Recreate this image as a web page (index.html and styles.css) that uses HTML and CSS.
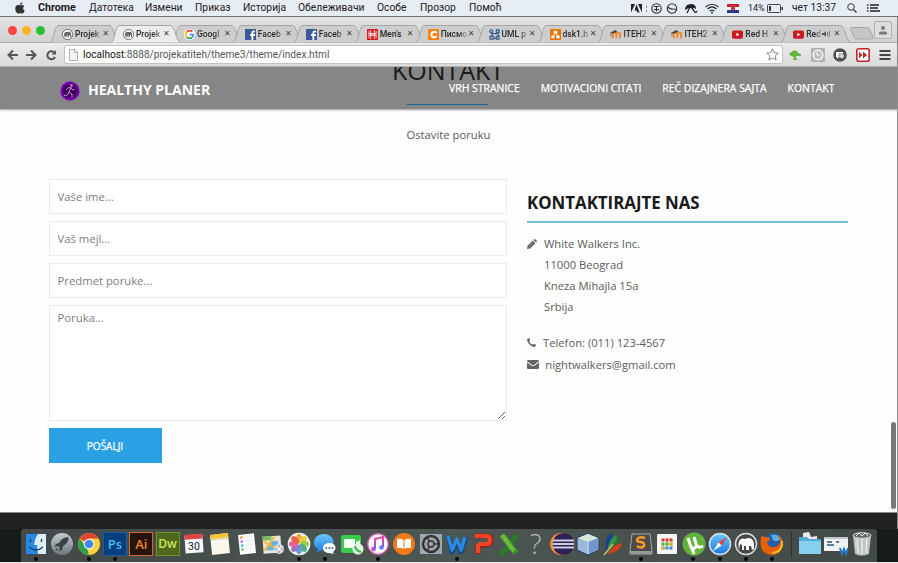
FILE: index.html
```
<!DOCTYPE html>
<html lang="sr">
<head>
<meta charset="utf-8">
<title>Projekat</title>
<link rel="stylesheet" href="styles.css">
</head>
<body>
<svg class="defs" width="0" height="0">
  <defs>
    <symbol id="tab" viewBox="0 0 70 18"><path d="M0 17.5C4 16 4 2 8 .5H60C64 2 65 16 69.500 17.500" stroke="#a5a5a5"/></symbol>
    <symbol id="mamp" viewBox="0 0 24 24"><circle cx="12" cy="12" r="11" fill="#fff" stroke="#666" stroke-width="2"/><path d="M5 18C3 8 7 5 11 7C17 4 21 8 20 17L18 18L17 13L15 13V18H12V13L10 14V18H7V13Z" fill="#666"/></symbol>
    <symbol id="fb" viewBox="0 0 12 12"><path fill="#3b5998" d="M0 0h12v12H0z"/><path fill="#fff" d="M7 12V7.500H5.500V5.500H7V4Q7 1.500 9.500 1.500H11V3.500H10Q9 3.500 9 4.500V5.500H11L10.700 7.500H9V12z"/></symbol>
    <symbol id="moodle" viewBox="0 0 12 12"><path d="M3 10V6Q3 4 5 4T7 6V10M7 6Q7 4 9 4T11 6V10" fill="none" stroke="#f58220" stroke-width="2"/><path d="M0 4L6 1L8 3L3 5z" fill="#444"/><path d="M1 4V8" stroke="#777"/></symbol>
    <symbol id="yt" viewBox="0 0 12 12"><rect y="1.500" width="12" height="9" rx="2" fill="#cc181e"/><path fill="#fff" d="M4.700 4v4l3.500-2z"/></symbol>
    <linearGradient id="blue" x2="0" y2="1"><stop stop-color="#69c8fa"/><stop offset="1" stop-color="#1979e6"/></linearGradient>
    <linearGradient id="silver" x2="0" y2="1"><stop stop-color="#c4cbd0"/><stop offset="1" stop-color="#70777c"/></linearGradient>
    <linearGradient id="pink" x2="0" y2="1"><stop stop-color="#f0489b"/><stop offset="1" stop-color="#8356e8"/></linearGradient>
    <radialGradient id="purple"><stop stop-color="#2a0040"/><stop offset=".6" stop-color="#3d0060"/><stop offset="1" stop-color="#8e09c4"/></radialGradient>
  </defs>
</svg>

<header class="menubar">
  <svg class="apple" viewBox="0 0 10 12"><path fill="#333" d="M5 3.500C6 3 8 2.500 9.300 4C7.500 5.200 7.800 7.700 9.700 8.500C9 10.500 8 12 6.800 11.500C5.500 11 5 11 3.800 11.500C2 12-.5 8 .5 5C1.300 2.800 3.500 2.700 5 3.500ZM5 3C5 1.500 6 .3 7.300 0C7.400 1.600 6.500 2.800 5 3Z"/></svg>
  <nav class="menus"><b>Chrome</b><span>Датотека</span><span>Измени</span><span>Приказ</span><span>Историја</span><span>Обележивачи</span><span>Особе</span><span>Прозор</span><span>Помоћ</span></nav>
  <div class="status">
    <svg width="122" height="14" viewBox="0 0 122 14">
      <path fill="#222" d="M0 3H4L0 11.500ZM7 3H11V11.500ZM5.500 3.500L8.500 11.500H6.500L5.600 9.600H3.500Z"/>
      <path d="M15.500 5v1.500M15.500 9v1.500" stroke="#666"/>
      <g fill="none" stroke="#333" stroke-width="1.100"><circle cx="25.500" cy="7.500" r="4.700"/><path d="M23 5.500H28M23 8.500H28M25.500 5V10.500"/><circle cx="41" cy="7.500" r="4.700"/><path d="M36.500 6Q39.500 9 45.500 8"/></g>
      <path d="M54 9Q54 3 60 3Q65 3 65 8Q60 5 54 9Z" fill="#222"/><path d="M60 6L64 11Q65 12 66 10M59 6L56 12" fill="none" stroke="#222" stroke-width="1.300"/>
      <g fill="none" stroke="#333" stroke-width="1.200"><path d="M74.500 6Q81 .5 87.500 6M76.500 8Q81 4 85.500 8M78.700 10.200Q81 8 83.300 10.200"/></g><circle cx="81" cy="11.700" r="1" fill="#333"/>
      <path fill="#d21c24" d="M96 3h12v3H96z"/><path fill="#f4f4f4" d="M96 6h12v3H96z"/><path fill="#24388e" d="M96 9h12v3H96z"/><path fill="#c43b49" d="M100 4h4v5l-2 1-2-1z"/>
    </svg>
    <span class="percent">14%</span>
    <svg class="battery" width="17" height="9" viewBox="0 0 17 9"><rect x=".5" y=".5" width="13" height="8" rx="1" fill="none" stroke="#444"/><path fill="#333" d="M2 2h2v5H2zM14.500 3h1.500v3h-1.500z"/></svg>
    <span class="clock">чет 13:37</span>
    <svg class="search" width="10" height="10" viewBox="0 0 10 10"><circle cx="4" cy="4" r="3.300" fill="none" stroke="#333"/><path d="M6.500 6.500L9.500 9.500" stroke="#333" stroke-width="1.300"/></svg>
    <svg width="13" height="8" viewBox="0 0 13 8"><path d="M0 1h1.500M3 1h9M0 4h1.500M3 4h8M0 7h1.500M3 7h10" stroke="#222" stroke-width="1.400"/></svg>
  </div>
</header>

<main class="window">
  <div class="tabstrip">
    <div class="lights"><i class="red"></i><i class="yellow"></i><i class="green"></i></div>
    <div class="tabs">
      <div class="tab"><svg class="shape"><use href="#tab"/></svg><svg class="fav"><use href="#mamp"/></svg><span>Projek</span><b>✕</b></div>
      <div class="tab active"><svg class="shape"><use href="#tab"/></svg><svg class="fav"><use href="#mamp"/></svg><span>Projek</span><b>✕</b></div>
      <div class="tab"><svg class="shape"><use href="#tab"/></svg><svg class="fav" viewBox="0 0 12 12"><circle cx="6" cy="6" r="6" fill="#fff"/><g fill="none" stroke-width="1.800"><path d="M9 3Q6 .5 3 3" stroke="#ea4335"/><path d="M3 3Q1 6 3 9" stroke="#fbbc05"/><path d="M3 9Q6 11.500 9 9" stroke="#34a853"/><path d="M9 9Q10 8 10 6H6" stroke="#4285f4"/></g></svg><span>Googl</span><b>✕</b></div>
      <div class="tab"><svg class="shape"><use href="#tab"/></svg><svg class="fav"><use href="#fb"/></svg><span>Faceb</span><b>✕</b></div>
      <div class="tab"><svg class="shape"><use href="#tab"/></svg><svg class="fav"><use href="#fb"/></svg><span>Faceb</span><b>✕</b></div>
      <div class="tab"><svg class="shape"><use href="#tab"/></svg><svg class="fav" viewBox="0 0 12 12"><rect width="12" height="12" rx="1" fill="#d71920"/><path d="M2 2v3h8V2M2 10V7h8v3M4 1v10M8 1v10M1 5.500h10" stroke="#fff" stroke-width=".8" fill="none"/></svg><span class="full">Men's</span><b>✕</b></div>
      <div class="tab"><svg class="shape"><use href="#tab"/></svg><svg class="fav" viewBox="0 0 12 12"><rect width="12" height="12" rx="1" fill="#f8820d"/><path d="M9.500 4.200Q7.500 2.300 4.800 3.500Q2.500 6 4.800 8.700Q7.500 9.800 9.500 8" stroke="#fff" stroke-width="2.200" fill="none"/></svg><span>Писмо</span><b>✕</b></div>
      <div class="tab"><svg class="shape"><use href="#tab"/></svg><svg class="fav" viewBox="0 0 12 12"><path d="M3 2V10H10V4M3 5H9" fill="none" stroke="#365f86" stroke-width="1.300"/><g fill="#a8bfd3" stroke="#365f86" stroke-width="1.200"><circle cx="2.500" cy="2.500" r="1.700"/><path d="M8 1h3v3H8zM1 8h4v3H1zM8 8h3v3H8z"/></g></svg><span>UML p</span><b>✕</b></div>
      <div class="tab"><svg class="shape"><use href="#tab"/></svg><svg class="fav" viewBox="0 0 12 12"><rect width="12" height="12" rx="1" fill="#e87400"/><path d="M6 3L3 9M6 3L9 9" stroke="#fff"/><path fill="#fff" d="M4 2h4v3H4zM1.500 7h3.500v3H1.500zM7 7h3.500v3H7z"/></svg><span>dsk1.h</span><b>✕</b></div>
      <div class="tab"><svg class="shape"><use href="#tab"/></svg><svg class="fav"><use href="#moodle"/></svg><span>ITEH2</span><b>✕</b></div>
      <div class="tab"><svg class="shape"><use href="#tab"/></svg><svg class="fav"><use href="#moodle"/></svg><span>ITEH2</span><b>✕</b></div>
      <div class="tab"><svg class="shape"><use href="#tab"/></svg><svg class="fav"><use href="#yt"/></svg><span>Red H</span><b>✕</b></div>
      <div class="tab"><svg class="shape"><use href="#tab"/></svg><svg class="fav"><use href="#yt"/></svg><span class="playing">Red</span><svg class="speaker" viewBox="0 0 8 8"><path d="M0 3h2l2-2v6L2 5H0z" fill="#555"/><path d="M5.500 2v4M7.300 1v6" stroke="#666" stroke-width=".8"/></svg><b>✕</b></div>
    </div>
    <svg class="newtab" viewBox="0 0 24 13"><path d="M2 .5H17Q19 .5 20 3L23 10Q23.500 12 22 12H7Q5 12 4 10L1 3Q0 .5 2 .5Z" fill="#c6c6c6" stroke="#a7a7a7"/></svg>
    <div class="profile"><svg width="10" height="9" viewBox="0 0 10 9"><circle cx="5" cy="2" r="2" fill="#777"/><path d="M1 8.500V7Q1 5.500 3 5.500H7Q9 5.500 9 7V8.500z" fill="#777"/></svg></div>
  </div>
  <div class="toolbar">
    <svg class="navicons" width="50" height="12" viewBox="0 0 50 12"><g fill="none" stroke="#555" stroke-width="2"><path d="M11 6H1.500M6 1.500L1.500 6L6 10.500M19 6H28.500M24 1.500L28.500 6L24 10.500"/><path d="M47 3.200A4 4 0 1 0 48 8"/></g><path fill="#555" d="M49 1V5.500H44.500z"/></svg>
    <div class="omnibox">
      <svg width="9" height="12" viewBox="0 0 9 12"><path d="M.5.5H6L8.500 3V11.500H.5ZM5.500.5V3.500H8.500" fill="#f4f4f4" stroke="#b0b0b0"/></svg>
      <span class="url"><em>localhost</em>:8888/projekatiteh/theme3/theme/index.html</span>
      <svg class="star" width="13" height="13" viewBox="0 0 13 13"><path d="M6.500.8L8.200 4.700L12.300 5.100L9.200 7.900L10.100 12L6.500 9.900L2.900 12L3.800 7.900L.7 5.100L4.800 4.700Z" fill="#fff" stroke="#777" stroke-width=".9"/></svg>
    </div>
    <div class="exts">
      <svg viewBox="0 0 14 14"><path d="M1 6Q2 4 4 4Q5 1 8 3Q10 3 10 5Q13 5 13 8H8V10L10 12H5L6 9L3 8Z" fill="#62b641"/></svg>
      <svg viewBox="0 0 14 14"><path fill="#b3b3b3" d="M0 0h14v14H0z"/><circle cx="7" cy="7" r="4.800" fill="#c0c0c0" stroke="#fff" stroke-width="1.300"/><path d="M6 4V7H9" fill="none" stroke="#fff"/></svg>
      <svg viewBox="0 0 14 14"><circle cx="7" cy="7" r="6.800" fill="#505050"/><path fill="#fff" d="M3 4h7v5H6l-2 2V9H3z"/><path fill="#ddd" stroke="#505050" stroke-width=".6" d="M6 6h5v4H9.500v1.500L8 10H6z"/></svg>
      <svg viewBox="0 0 14 14"><rect x=".8" y=".8" width="12.400" height="12.400" rx="2" fill="#fff" stroke="#bd2824" stroke-width="1.600"/><path fill="#bd2824" d="M3 3.500L6.500 7L3 10.500zM7 3.500L11 7L7 10.500z"/></svg>
      <svg viewBox="0 0 14 14"><path d="M1.500 3H12.500M1.500 7H12.500M1.500 11H12.500" stroke="#444" stroke-width="2.200"/></svg>
    </div>
  </div>

  <div class="page">
    <div class="navbar">
      <h2 class="section-title">KONTAKT</h2>
      <div class="brand"><svg width="20" height="20" viewBox="0 0 20 20"><circle cx="10" cy="10" r="9.700" fill="url(#purple)"/><circle cx="11.500" cy="4.500" r="1.200" fill="#d98adb"/><path d="M10.800 6.500L9 11L12 13V16.500M9 11L7.500 14L4 14.500M6 9L8 6.800L11 6.500L12.500 9L14.500 8.500" fill="none" stroke="#d98adb"/></svg><strong>HEALTHY PLANER</strong></div>
      <nav class="links"><a>VRH STRANICE</a><a>MOTIVACIONI CITATI</a><a>REČ DIZAJNERA SAJTA</a><a>KONTAKT</a></nav>
    </div>
    <p class="lead">Ostavite poruku</p>
    <div class="contact">
      <form class="form">
        <input type="text" placeholder="Vaše ime...">
        <input type="text" placeholder="Vaš mejl...">
        <input type="text" placeholder="Predmet poruke...">
        <textarea placeholder="Poruka..."></textarea>
        <button type="button">POŠALJI</button>
      </form>
      <section class="info">
        <h3>KONTAKTIRAJTE NAS</h3>
        <address>
          <p class="row"><svg width="10" height="10" viewBox="0 0 10 10"><path fill="#666" d="M0 10L.5 6.800L5.700 1.600L8.400 4.300L3.200 9.500ZM6.400 1L7.300.2Q8 0 8.500.4L9.700 1.600Q10 2 9.800 2.700L9 3.600Z"/><path d="M2 7.200L6 3.200" stroke="#ccc" stroke-width=".4"/></svg><span>White Walkers Inc.</span></p>
          <p class="row indent">11000 Beograd</p>
          <p class="row indent">Kneza Mihajla 15a</p>
          <p class="row indent">Srbija</p>
          <p class="row phone"><svg width="9" height="9" viewBox="0 0 9 9"><path fill="#666" d="M0 1.500Q1 0 2.200 0L3.200 2.400L2.200 3.500Q3.300 5.700 5.500 6.800L6.600 5.700L9 6.800Q9 8.500 7.500 9Q5 9 2.500 6.500T0 1.500Z"/></svg><span>Telefon: (011) 123-4567</span></p>
          <p class="row mail"><svg width="12" height="9" viewBox="0 0 12 9"><path fill="#666" d="M0 1Q0 0 1 0H11Q12 0 12 1L7 4.900Q6 5.500 5 4.900ZM0 2.200L4.500 5.700Q6 6.500 7.500 5.700L12 2.200V8Q12 9 11 9H1Q0 9 0 8Z"/></svg><span>nightwalkers@gmail.com</span></p>
        </address>
      </section>
    </div>
    <i class="thumb"></i>
    <footer></footer>
  </div>
</main>

<div class="desktop">
  <div class="dock">
    <div class="app run"><svg viewBox="0 0 24 24"><path fill="#2389e5" d="M2 2H22V22H2z"/><path fill="#dfedf7" d="M14 2H22V22H14Q13 17 13 13H10Q11 6 14 2z"/><path d="M6.500 7v3M17.500 7v3M5 15Q12 21 19 15" fill="none" stroke="#173c67" stroke-width="1.300"/></svg></div>
    <div class="app"><svg viewBox="0 0 24 24"><circle cx="12" cy="12" r="11" fill="url(#silver)"/><path fill="#3b4248" d="M18.500 5Q12 5 9 11L6 12L4.500 15L8 14L10 16L9 19.500L12 18L13 14Q19 11 18.500 5ZM7 16L5 19L8 17.500z"/></svg></div>
    <div class="app run"><svg viewBox="0 0 24 24"><circle cx="12" cy="12" r="11" fill="#ffd23f"/><path fill="#dd4534" d="M12 12L2.500 6.500A11 11 0 0 1 21.500 6.500H12z"/><path fill="#2da04f" d="M2.500 6.500L10 16L12 23A11 11 0 0 1 2.500 6.500"/><circle cx="12" cy="12" r="5.300" fill="#fff"/><circle cx="12" cy="12" r="4.300" fill="#4285f4"/></svg></div>
    <div class="app run tile ps"><span>Ps</span></div>
    <div class="app tile ai"><span>Ai</span></div>
    <div class="app tile dw"><span>Dw</span></div>
    <div class="app cal"><svg viewBox="0 0 24 24"><g transform="rotate(-4 12 12)"><path fill="#f7f7f7" d="M3 3h18v18H3z"/><path fill="#df4546" d="M3 2h18v5H3z"/></g></svg><small>30</small></div>
    <div class="app"><svg viewBox="0 0 24 24"><g transform="rotate(-6 12 12)"><path fill="#faf8ed" d="M3 2h18v20H3z"/><path fill="#f5c230" d="M3 2h18v4H3z"/><path d="M3 7h18" stroke="#b5a36a" stroke-width=".6"/></g></svg></div>
    <div class="app"><svg viewBox="0 0 24 24"><g transform="rotate(-6 12 12)"><path fill="#fafafa" d="M4 2h16v20H4z"/><g fill="#f28a24"><circle cx="7" cy="5" r="1.200"/><circle cx="7" cy="9" r="1.200" fill="#a45ae0"/><circle cx="7" cy="13" r="1.200" fill="#2fa7e3"/><circle cx="7" cy="17" r="1.200" fill="#63bf3a"/></g><path d="M10 5h8M10 9h8M10 13h8M10 17h8" stroke="#ddd" stroke-width=".5"/></g></svg></div>
    <div class="app"><svg viewBox="0 0 24 24"><g transform="rotate(-4 12 12)"><path fill="#e9e5d8" d="M2 4h18v17H2z"/><path fill="#79be5d" d="M2 4h9v4H2z"/><path fill="#65b5e3" d="M9 9h8v9H5z"/><path d="M3 18L14 5M3 9L17 18" stroke="#f2b93e" stroke-width="2"/></g><circle cx="18" cy="17" r="5" fill="#d8dde1"/><path d="M18 13v8M14 17h8" stroke="#888"/><circle cx="18" cy="17" r="1.800" fill="#f8f8f8"/></svg></div>
    <div class="app run"><svg viewBox="0 0 24 24"><circle cx="12" cy="12" r="11.300" fill="#f8f8f5"/><g opacity=".88"><ellipse cx="12" cy="6.500" rx="3" ry="4.700" fill="#f69b20"/><ellipse cx="12" cy="6.500" rx="3" ry="4.700" fill="#e8cc24" transform="rotate(45 12 12)"/><ellipse cx="12" cy="6.500" rx="3" ry="4.700" fill="#8cc43e" transform="rotate(90 12 12)"/><ellipse cx="12" cy="6.500" rx="3" ry="4.700" fill="#36a878" transform="rotate(135 12 12)"/><ellipse cx="12" cy="6.500" rx="3" ry="4.700" fill="#4f91d9" transform="rotate(180 12 12)"/><ellipse cx="12" cy="6.500" rx="3" ry="4.700" fill="#8e64be" transform="rotate(225 12 12)"/><ellipse cx="12" cy="6.500" rx="3" ry="4.700" fill="#e05192" transform="rotate(270 12 12)"/><ellipse cx="12" cy="6.500" rx="3" ry="4.700" fill="#ed4e3d" transform="rotate(315 12 12)"/></g></svg></div>
    <div class="app run"><svg viewBox="0 0 24 24"><path d="M11 2C0 2-2 14 5 17L3 21L9 18C23 19 25 3 11 2Z" fill="url(#blue)"/><path d="M16 11C8 11 8 21 16 21L21 22L20 20C25 16 22 11 16 11Z" fill="#f2f7fb"/><path d="M12.500 16h1.700M15.500 16h1.700M18.500 16h1.700" stroke="#4d5961" stroke-width="1.700"/></svg></div>
    <div class="app"><svg viewBox="0 0 24 24"><rect x="1" y="3" width="20" height="18" rx="3" fill="#35cb4b"/><path fill="#f4fff4" d="M4 7h11v9H4zM16 10l4-2v7l-4-2z"/><circle cx="18" cy="17" r="5.500" fill="#e4f6e5"/><path d="M15 14Q16 19 21 20" stroke="#35b848" stroke-width="2" fill="none"/></svg></div>
    <div class="app run"><svg viewBox="0 0 24 24"><circle cx="12" cy="12" r="10.300" fill="#fafafa" stroke="#d75bae" stroke-width="1.200"/><path d="M9 17V7L17 5V15" fill="none" stroke="url(#pink)" stroke-width="2"/><circle cx="7.500" cy="17" r="2.300" fill="#ae55df"/><circle cx="15.500" cy="15.500" r="2.300" fill="#6480ee"/></svg></div>
    <div class="app"><svg viewBox="0 0 24 24"><circle cx="12" cy="12" r="11" fill="#f27a18"/><path fill="#fff" d="M5 7Q9 6 11.500 8V17Q9 15 5 16zM19 7Q15 6 12.500 8V17Q15 15 19 16z"/></svg></div>
    <div class="app"><svg viewBox="0 0 24 24"><path fill="#9aa8b3" d="M1 2h22v20H1z"/><circle cx="12" cy="12" r="8" fill="#9da3a8" stroke="#333" stroke-width="2.500"/><circle cx="12" cy="12" r="3" fill="none" stroke="#333" stroke-width="1.500"/><path d="M15 12h5M10.500 9.500L8 5M10.500 14.500L8 19" stroke="#333" stroke-width="1.500"/></svg></div>
    <div class="app run"><svg viewBox="0 0 24 24"><path d="M3.500 4L7 20L12.500 8L16 20L21 5" fill="none" stroke="#0b4c8d" stroke-width="5" stroke-linejoin="round"/><path d="M3 4L7 18L12 7L16 18L20 5" fill="none" stroke="#2e88d9" stroke-width="3.500" stroke-linejoin="round"/></svg></div>
    <div class="app"><svg viewBox="0 0 24 24"><path d="M7 22V12M4 4H15Q20 4 20 8T15 13H7" fill="none" stroke="#a71910" stroke-width="5"/><path d="M7 21V12M4 4H15Q19 4 19 8T15 12H7" fill="none" stroke="#f04425" stroke-width="4"/></svg></div>
    <div class="app"><svg viewBox="0 0 24 24"><path d="M20 3Q15 9 13 12Q8 20 3 22" fill="none" stroke="#297d27" stroke-width="5"/><path d="M5 3L19 21" stroke="#3c9430" stroke-width="6"/><path d="M5 3L17 19" stroke="#6bbd36" stroke-width="4"/></svg></div>
    <div class="app question"><span>?</span></div>
    <div class="app"><svg viewBox="0 0 24 24"><circle cx="11" cy="12" r="11" fill="#f58b2a"/><circle cx="13.500" cy="12" r="10.800" fill="#2c2255"/><path d="M2.500 8.500h22M2.500 12h22M2.500 15.500h22" stroke="#d1cbe2" stroke-width="2"/></svg></div>
    <div class="app"><svg viewBox="0 0 24 24"><path d="M12 1L23 6V18L12 23L1 18V6Z" fill="#9cb9dd" stroke="#273a58"/><path fill="#d7e9d6" d="M12 2L22 6L12 10L2 6z"/><path fill="#7396cc" d="M12 10L22 6V18L12 22z"/><path d="M12 10V22" stroke="#dce9f5"/></svg></div>
    <div class="app"><svg viewBox="0 0 24 24"><path d="M3 22Q1 4 9 1Q11 14 3 22" fill="#173d99"/><path d="M4 22Q5 6 14 3Q15 15 4 22" fill="#329142"/><path d="M4 22Q10 10 17 7Q18 15 4 22" fill="#2d6f35"/><path d="M5 22Q10 12 19 11Q18 20 5 22" fill="#cf3f20"/><path d="M1 23L10 12" stroke="#d9b56b" stroke-width="1.500"/></svg></div>
    <div class="app run"><svg viewBox="0 0 24 24"><path fill="#4b4b4b" stroke="#aaa" d="M3 2H21L23 19V22H1V19z"/><path fill="#999" d="M1 19H23V22H1z"/><path d="M16 6Q9 4 8 8Q8 10 12 10Q16 11 15 14Q12 17 8 14" fill="none" stroke="#f89a24" stroke-width="2.500"/></svg></div>
    <div class="app"><svg viewBox="0 0 24 24"><rect x="2" y="2" width="20" height="20" rx="1" fill="#f6f6f6"/><g stroke-width="3" stroke-dasharray="3 1"><path d="M6.500 8H18" stroke="#df3531"/><path d="M6.500 12H18" stroke="#51ad3c"/><path d="M6.500 16H18" stroke="#398bd6"/></g><path fill="#f5a71c" d="M14.500 10.500h3v3h-3zM6.500 14.500h3v3h-3z"/></svg></div>
    <div class="app run"><svg viewBox="0 0 24 24"><circle cx="12" cy="12" r="11.500" fill="#62b33b"/><path d="M6 6L9 15Q10 17 13 16Q15 15 14 12L12 5M14 12Q16 17 21 14M9 14L12 22" fill="none" stroke="#fff" stroke-width="3"/></svg></div>
    <div class="app run"><svg viewBox="0 0 24 24"><circle cx="12" cy="12" r="10.500" fill="url(#blue)" stroke="#d9e1e7" stroke-width="1.500"/><path fill="#ef3e36" d="M19 5L10.500 10.500L13.500 13.500z"/><path fill="#fff" d="M5 19L10.500 10.500L13.500 13.500z"/></svg></div>
    <div class="app run"><svg viewBox="0 0 24 24"><circle cx="12" cy="12" r="10.500" fill="#464646" stroke="#ddd" stroke-width="1.500"/><path d="M5 18C3 8 7 5 11 7C17 4 21 8 20 17L18 18L17 14L15 14V18H12V14L10 14V18H8V13L6 12Z" fill="#fff"/></svg></div>
    <div class="app run"><svg viewBox="0 0 24 24"><circle cx="13" cy="11" r="10" fill="#255ba8"/><path fill="#57b0dd" d="M11 3Q18 1 20 7Q17 11 13 8z"/><path fill="#e66000" d="M2 3Q4 6 7 5Q10 5 10 8L7 10Q8 15 13 15Q19 15 20 10Q20 6 18 3Q24 7 23 14Q20 23 12 23Q1 22 .500 12Q.5 6 2 3Z"/><path d="M22 9Q23 20 12 21" stroke="#ffb52b" stroke-width="1.800" fill="none"/></svg></div>
    <i class="divider"></i>
    <div class="app"><svg viewBox="0 0 24 24"><path fill="#e7edf0" d="M5 1l6-1 2 5 6-1v6H5z"/><path fill="#54add9" d="M1 5h8l2 2h12v14H1z"/><path fill="#86cfee" d="M1 9h22v13H1z"/></svg></div>
    <div class="app"><svg viewBox="0 0 24 24"><path fill="#f0f2f4" d="M0 5h24v14H0z"/><path fill="#bcc6cd" d="M0 5h24v2H0z"/><path d="M3 10h5M3 13h7M12 10h3" stroke="#5c7ba1" stroke-width="2"/><path d="M16 16L18 22L20 17L22 22L24 16" fill="none" stroke="#237ac9" stroke-width="2"/></svg></div>
    <div class="app"><svg viewBox="0 0 24 24"><path fill="#bfc3c3" d="M3 3H21L19 22Q12 25 5 22Z"/><path d="M7 7L8 21M12 7V22M17 7L16 21" stroke="#e8eaea" stroke-width="1.500"/><ellipse cx="12" cy="3.500" rx="9" ry="2.800" fill="#666" stroke="#ddd"/><path d="M6 4L9 1L12 4L15 1L18 4" fill="none" stroke="#eee"/></svg></div>
  </div>
</div>
</body>
</html>
```

FILE: styles.css
```
* { box-sizing: border-box; }
body { margin: 0; width: 898px; height: 563px; overflow: hidden; background: #eee; font-family: "Open Sans", sans-serif; display: flex; flex-direction: column; }
p, h2, h3 { margin: 0; }
svg { display: block; flex: none; }
.defs { position: absolute; }

.menubar { height: 16px; flex: none; display: flex; align-items: center; background: #e6edf5; font: 10.300px/16px Roboto, sans-serif; color: #1e2023; }
.apple { width: 10px; height: 12px; margin: 0 13px 0 15px; }
.menus { display: grid; grid-template-columns: 51px 56px 50px 48px 55px 79px 43px 49px 40px; white-space: nowrap; }
.menus b { font-size: 10.700px; }
.status { display: flex; align-items: center; flex: 1; padding-left: 122px; white-space: nowrap; }
.percent { font-size: 9px; width: 19px; margin-left: -5px; }
.clock { margin-left: 8px; width: 55px; }
.search { margin-right: 10px; }

.window { height: 513px; flex: none; background: #fff; border-top: 1px solid #6c7377; border-right: 1px solid #8a8a8a; display: flex; flex-direction: column; }
.tabstrip { height: 26px; flex: none; display: flex; background: linear-gradient(#e3e3e3, #d2d2d2); border-bottom: 1px solid #aaa; }
.lights { width: 54px; flex: none; display: flex; gap: 5px; padding: 9px 0 0 8px; }
.lights i { width: 9px; height: 9px; border-radius: 50%; }
.red { background: #fc4743; }
.yellow { background: #fdb324; }
.green { background: #29c131; }
.tabs { display: flex; padding-top: 8px; flex: none; }
.tab { width: 60.950px; height: 18px; position: relative; display: flex; align-items: center; padding-left: 8px; font: 500 8.500px/18px Roboto, sans-serif; color: #2b2b2b; }
.shape { position: absolute; left: -4px; top: 0; width: 70px; height: 18px; fill: #cdcdcd; }
.active { z-index: 2; }
.active .shape { fill: #ececec; }
.fav { width: 11px; height: 11px; position: relative; }
.tab span { width: 26px; margin-left: 2px; white-space: nowrap; position: relative; -webkit-mask-image: linear-gradient(90deg, #000 65%, #0004); mask-image: linear-gradient(90deg, #000 65%, #0004); }
.tab span.full { -webkit-mask-image: none; mask-image: none; }
.tab b { font: 8px/18px "DejaVu Sans", sans-serif; width: 9px; text-align: center; position: relative; color: #444; }
.tab span.playing { width: 15px; }
.speaker { width: 8px; height: 8px; margin: 0 2px 0 1px; position: relative; }
.newtab { width: 24px; height: 13px; margin: 10px 0 0 4px; }
.profile { width: 18px; height: 18px; margin: 4px 0 0 0; border: 1px solid #b0b0b0; border-radius: 2px; display: flex; align-items: center; justify-content: center; background: #ddd; flex: none; }

.toolbar { height: 24px; flex: none; display: flex; align-items: center; background: linear-gradient(#ececec, #dadada); border-bottom: 1px solid #b5b5b5; }
.navicons { margin: 0 7px 0 7px; }
.omnibox { width: 719px; height: 19px; border: 1px solid #c2c2c2; border-radius: 2px; background: #fff; display: flex; align-items: center; padding: 0 3px 0 4px; }
.url { font: 10.130px/17px Roboto, sans-serif; color: #555; margin-left: 5px; flex: 1; }
.url em { font-style: normal; color: #111; }
.exts { display: flex; gap: 8.500px; margin-left: 5px; }
.exts svg { width: 14px; height: 14px; }

.page { flex: 1; min-height: 0; position: relative; display: flex; flex-direction: column; background: #fefefe; }
.navbar { height: 42px; flex: none; position: relative; overflow: hidden; display: flex; align-items: flex-start; background: #868686; box-shadow: 0 1px 2px #999; color: #fff; }
.section-title { position: absolute; left: 0; width: 896px; top: -14px; text-align: center; font-weight: 400; font-size: 25px; line-height: 34px; color: #1a1a1a; }
.section-title::after { content: ""; position: absolute; left: 407px; top: 51px; width: 81px; height: 1px; background: #20658f; }
.brand { display: flex; align-items: center; gap: 8px; padding: 14px 0 0 60px; width: 449px; flex: none; position: relative; font-size: 14px; line-height: 20px; }
.brand strong { position: relative; top: -1px; }
.links { display: flex; gap: 21px; padding-top: 13px; font-size: 10.450px; font-weight: 400; -webkit-text-stroke: .25px #fff; line-height: 17px; white-space: nowrap; position: relative; }
.lead { text-align: center; font-size: 11.250px; line-height: 18px; color: #5c5c5c; margin-top: 17px; }
.contact { display: flex; gap: 20.500px; margin: 35px 0 0 48.500px; }
.form { width: 458px; display: flex; flex-direction: column; gap: 7px; }
.form input, .form textarea { border: 1px solid #ebebeb; width: 100%; margin: 0; padding: 0 8px; background: #fff; font: 11.300px/18px "Open Sans", sans-serif; outline: 0; height: 35px; }
.form textarea { height: 116px; padding-top: 3px; }
.form ::placeholder { color: #7d7d7d; opacity: 1; }
.form button { width: 113px; height: 35px; border: 0; background: #2aa1e5; color: #fff; font: 400 10px/16px "Open Sans", sans-serif; -webkit-text-stroke: .25px #fff; padding: 0; }
.info { width: 321px; }
.info h3 { height: 44px; padding-top: 12px; font-size: 16.850px; line-height: 24px; color: #1a1a1a; border-bottom: 2px solid #73bfe6; }
address { font-style: normal; font-size: 11.230px; line-height: 21px; color: #5c5c5c; padding-top: 10px; }
.row { display: flex; align-items: center; gap: 7px; height: 21.100px; }
.indent { padding-left: 17px; }
.phone { margin-top: 15px; }
.mail { gap: 6.300px; }
.thumb { position: absolute; left: 891px; top: 355px; width: 5px; height: 87px; border-radius: 3px; background: #777; }
footer { height: 17px; margin-top: auto; background: #222; border-top: 1px solid #888; }

.desktop { height: 33px; flex: none; display: flex; background: #151c1a; padding-left: 21px; }
.dock { width: 856px; height: 33px; background: linear-gradient(90deg, #424948, #4c5652 50%, #424a48); border-radius: 3px 3px 0 0; display: flex; padding: 3px 0 0 2px; }
.app { width: 26.300px; flex: none; position: relative; display: flex; justify-content: center; }
.app svg { width: 24px; height: 24px; }
.run::after { content: ""; position: absolute; width: 4px; height: 4px; bottom: 1px; left: 11px; border-radius: 50%; background: #050505; }
.tile span { width: 24px; height: 24px; font: 600 13px/22px "Open Sans", sans-serif; text-align: center; border: 1px solid; }
.tile.ps span { background: #063f7d; border-color: #155ea3; color: #48bbef; }
.tile.ai span { background: #27150b; border-color: #cf6820; color: #f1882b; }
.tile.dw span { background: #4f671d; border-color: #73922a; color: #c4e95c; font-size: 12px; }
.cal small { position: absolute; top: 8px; font: 10.500px/14px Roboto, sans-serif; color: #222; }
.question span { font: 300 27px/24px "Open Sans", sans-serif; color: #b7bcba; }
.divider { width: 1px; height: 25px; margin: 0 5px; background: #2c302f; }
```
